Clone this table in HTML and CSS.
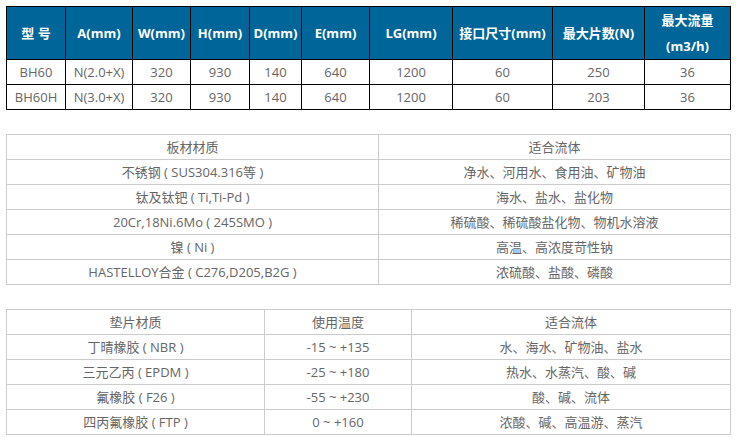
FILE: index.html
```html
<!DOCTYPE html>
<html lang="zh-CN">
<head>
<meta charset="utf-8">
<link rel="stylesheet" href="styles.css">
</head>
<body>
<div class="page">
  <table class="spec">
    <colgroup>
      <col class="c1"><col class="c2"><col class="c3"><col class="c4"><col class="c5">
      <col class="c6"><col class="c7"><col class="c8"><col class="c9"><col class="c10">
    </colgroup>
    <thead>
      <tr>
        <th>型 号</th><th>A(mm)</th><th>W(mm)</th><th>H(mm)</th><th>D(mm)</th>
        <th>E(mm)</th><th>LG(mm)</th><th>接口尺寸(mm)</th><th>最大片数(N)</th>
        <th>最大流量<br>(m3/h)</th>
      </tr>
    </thead>
    <tbody>
      <tr><td>BH60</td><td>N(2.0+X)</td><td>320</td><td>930</td><td>140</td><td>640</td><td>1200</td><td>60</td><td>250</td><td>36</td></tr>
      <tr><td>BH60H</td><td>N(3.0+X)</td><td>320</td><td>930</td><td>140</td><td>640</td><td>1200</td><td>60</td><td>203</td><td>36</td></tr>
    </tbody>
  </table>

  <table class="grid plate">
    <colgroup><col class="p1"><col class="p2"></colgroup>
    <tr><td>板材材质</td><td>适合流体</td></tr>
    <tr><td>不锈钢 ( SUS304.316等 )</td><td>净水、河用水、食用油、矿物油</td></tr>
    <tr><td>钛及钛钯 ( Ti,Ti-Pd )</td><td>海水、盐水、盐化物</td></tr>
    <tr><td>20Cr,18Ni.6Mo ( 245SMO )</td><td>稀硫酸、稀硫酸盐化物、物机水溶液</td></tr>
    <tr><td>镍 ( Ni )</td><td>高温、高浓度苛性钠</td></tr>
    <tr><td>HASTELLOY合金 ( C276,D205,B2G )</td><td>浓硫酸、盐酸、磷酸</td></tr>
  </table>

  <table class="grid gasket">
    <colgroup><col class="g1"><col class="g2"><col class="g3"></colgroup>
    <tr><td>垫片材质</td><td>使用温度</td><td>适合流体</td></tr>
    <tr><td>丁晴橡胶 ( NBR )</td><td>-15 ~ +135</td><td>水、海水、矿物油、盐水</td></tr>
    <tr><td>三元乙丙 ( EPDM )</td><td>-25 ~ +180</td><td>热水、水蒸汽、酸、碱</td></tr>
    <tr><td>氟橡胶 ( F26 )</td><td>-55 ~ +230</td><td>酸、碱、流体</td></tr>
    <tr><td>四丙氟橡胶 ( FTP )</td><td>0 ~ +160</td><td>浓酸、碱、高温游、蒸汽</td></tr>
  </table>
</div>
</body>
</html>
```

FILE: styles.css
```css
html, body {
  margin: 0;
  padding: 0;
  background: #fff;
}
.page {
  padding: 6px;
  font-family: "Open Sans", "Noto Sans CJK SC", sans-serif;
  font-size: 13px;
  color: #666;
}
table {
  border-collapse: collapse;
  table-layout: fixed;
  width: 724px;
}
td, th {
  padding: 0;
  text-align: center;
  white-space: nowrap;
  overflow: hidden;
}
.spec td, .spec th {
  border: 1px solid #000;
}
.spec th {
  background: #006699;
  color: #fff;
  font-weight: bold;
  height: 48px;
  line-height: 26px;
}
.spec td {
  height: 24px;
  line-height: 24px;
}
.c1 { width: 59px; }
.c2 { width: 67px; }
.c3 { width: 58px; }
.c4 { width: 59px; }
.c5 { width: 52px; }
.c6 { width: 68px; }
.c7 { width: 83px; }
.c8 { width: 100px; }
.c9 { width: 92px; }
.c10 { width: 86px; }

.grid td {
  border: 1px solid #ccc;
  height: 24px;
  line-height: 24px;
}
.plate {
  margin-top: 24px;
}
.gasket {
  margin-top: 24px;
}
.p1 { width: 372px; }
.p2 { width: 352px; }
.g1 { width: 258px; }
.g2 { width: 147px; }
.g3 { width: 319px; }
```
